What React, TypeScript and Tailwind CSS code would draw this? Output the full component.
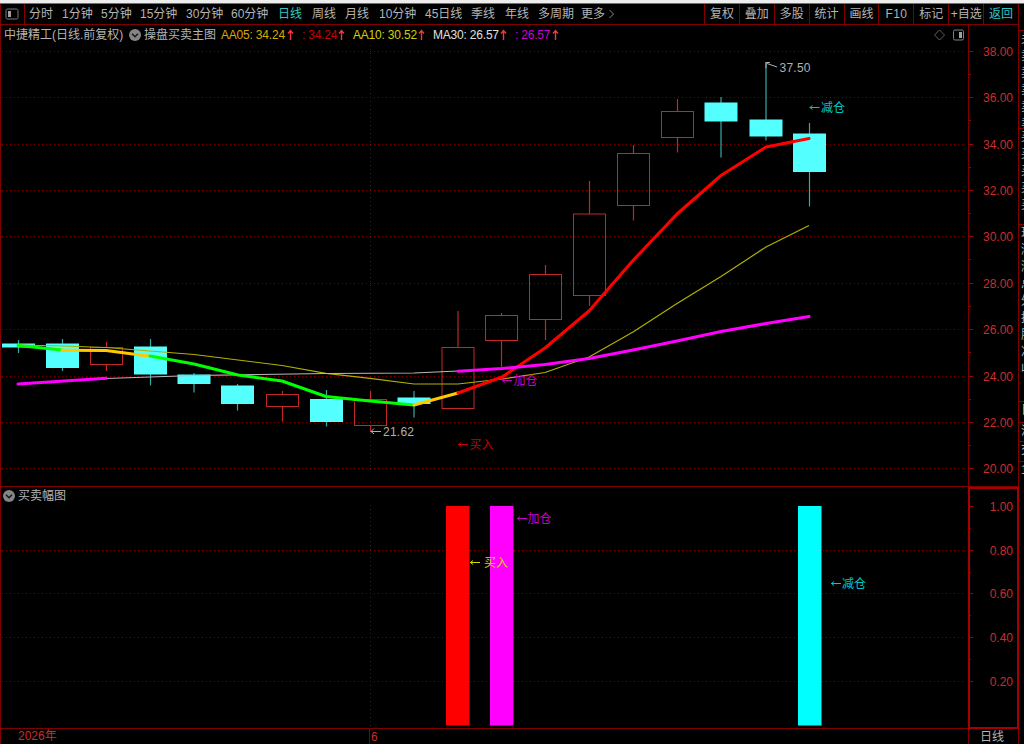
import React from 'react';
import clsx from 'clsx';

const periods = [
  { label: '分时', width: 'w-[33px]' },
  { label: '1分钟', width: 'w-[39px]' },
  { label: '5分钟', width: 'w-[39px]' },
  { label: '15分钟', width: 'w-[46px]' },
  { label: '30分钟', width: 'w-[45px]' },
  { label: '60分钟', width: 'w-[47px]' },
  { label: '日线', width: 'w-[34px]', active: true },
  { label: '周线', width: 'w-[33px]' },
  { label: '月线', width: 'w-[34px]' },
  { label: '10分钟', width: 'w-[46px]' },
  { label: '45日线', width: 'w-[46px]' },
  { label: '季线', width: 'w-[34px]' },
  { label: '年线', width: 'w-[33px]' },
  { label: '多周期', width: 'w-[43px]' },
  { label: '更多', width: 'w-[26px]' },
];

const tools = ['复权', '叠加', '多股', '统计', '画线', 'F10', '标记', '+自选', '返回'];

const indicators = [
  { label: 'AA05: 34.24', color: 'text-[#d8a800]', width: 'w-[81px]' },
  { label: ': 34.24', color: 'text-[#c80000]', width: 'w-[51px]' },
  { label: 'AA10: 30.52', color: 'text-[#d0d000]', width: 'w-[80px]' },
  { label: 'MA30: 26.57', color: 'text-[#e0e0e0]', width: 'w-[82px]' },
  { label: ': 26.57', color: 'text-[#d000d0]', width: 'w-[52px]' },
];

// x center, high, body top, body bottom, low, rising
const candles: [number, number, number, number, number, boolean][] = [
  [18.5, 340, 344, 347, 353, false],
  [62.5, 339, 344, 367.5, 371, false],
  [106.5, 342, 347.5, 364.5, 371, true],
  [150.5, 339, 347, 374, 385.5, false],
  [194, 373, 375, 383.5, 392.5, false],
  [237.5, 384, 386, 403.5, 410.5, false],
  [282.5, 391, 394.5, 406.5, 421.5, true],
  [326.5, 390, 399.5, 421.5, 426.5, false],
  [370.5, 391, 399.5, 425.5, 431, true],
  [414, 391, 398, 403.5, 417.5, false],
  [458, 311, 347.5, 408.5, 408.5, true],
  [501.5, 313, 315.5, 340.5, 367, true],
  [545.5, 265, 274.5, 319.5, 340, true],
  [589.5, 181, 214, 295.5, 306, true],
  [633.5, 145, 153.5, 205.5, 220.5, true],
  [677.5, 99, 111.5, 137.5, 152.5, true],
  [721, 97, 103, 121, 157.5, false],
  [766, 62, 120, 136, 140.5, false],
  [809.5, 123, 134, 171.5, 206.5, false],
];

const priceTicks = [
  ['38.00', 51.5], ['36.00', 97.5], ['34.00', 144.5], ['32.00', 190.5], ['30.00', 236.5],
  ['28.00', 283.5], ['26.00', 329.5], ['24.00', 376.5], ['22.00', 422.5], ['20.00', 468.5],
] as [string, number][];

const signalTicks = [
  ['1.00', 506.5], ['0.80', 550.5], ['0.60', 593.5], ['0.40', 637.5], ['0.20', 681.5],
] as [string, number][];

const quoteMarks = [
  { y: 'h-[98px]', text: '关卖卖卖卖卖' },
  { y: 'h-[96px]', text: '买买买买买' },
  { y: 'h-[177px]', text: '现涨涨总外换股净收' },
  { y: 'h-[21px]', text: '日', color: 'text-[#d0d000]' },
  { y: 'h-[19px]', text: '流' },
  { y: 'h-[20px]', text: '交' },
  { y: 'h-[259px]', text: '1' },
];

function RiseArrow() {
  return (
    <svg width="7" height="12" viewBox="0 0 7 12" className="shrink-0">
      <path d="M3.5 11V2M1 4.5L3.5 1.5L6 4.5" fill="none" stroke="#f03838" strokeWidth="1.4" />
    </svg>
  );
}

function Toggle() {
  return (
    <svg width="12" height="12" viewBox="0 0 12 12" className="shrink-0">
      <circle cx="6" cy="6" r="6" fill="#858585" />
      <path d="M3 4.8L6 7.8L9 4.8" fill="none" stroke="#181818" strokeWidth="1.5" />
    </svg>
  );
}

interface SignalProps {
  x: number;
  y: number;
  label: string;
  color: string;
  gap?: number;
}

function Signal({ x, y, label, color, gap = 11.5 }: SignalProps) {
  return (
    <g>
      <path
        d={`M${x} ${y + 0.5}h10M${x + 3} ${y - 1.5}l-2.5 2l2.5 2`}
        fill="none"
        stroke={color}
        strokeWidth="1"
      />
      <text x={x + gap} y={y + 4.5} fill={color} fontSize="12">
        {label}
      </text>
    </g>
  );
}

function GridLines({ ticks }: { ticks: [string, number][] }) {
  return (
    <g stroke="#780000" strokeWidth="1" strokeDasharray="1 3">
      {ticks.map(([label, y]) => (
        <path key={label} d={`M2 ${y}H965`} />
      ))}
    </g>
  );
}

function Candles() {
  return (
    <g>
      {candles.map(([x, high, top, bottom, low, rising]) => (
        <g key={x} stroke={rising ? '#c02828' : '#38a8a8'} strokeWidth="1.2">
          <path d={`M${x} ${high}V${top}M${x} ${bottom}V${low}`} />
          <rect
            x={x - 16}
            y={top}
            width="32"
            height={bottom - top}
            fill={rising ? 'none' : '#54ffff'}
            stroke={rising ? '#c02828' : '#54ffff'}
            strokeWidth="1"
          />
        </g>
      ))}
    </g>
  );
}

function PriceChart() {
  return (
    <svg width="967" height="442" viewBox="1 44 967 442" className="block">
      <GridLines ticks={priceTicks} />
      <path d="M370.5 45V472" stroke="#780000" strokeDasharray="1 3" />
      <Candles />
      <g fill="none" strokeLinejoin="round">
        <path
          d="M18 345L62 346L106 347.5L150 351L194 354.5L238 360L282 365.5L326 373.3L370 378.3L414 384L458 384L502 379L545 372.5L589 357L633 332L677 303.5L721 276.5L766 247L809 225.5"
          stroke="#b0b000"
          strokeWidth="1.2"
        />
        <path d="M106 378.5L150 377L194 375.5L260 374.5L326 373.5L414 373L458 371" stroke="#b8b8b8" strokeWidth="1.2" />
        <g strokeWidth="3" strokeLinecap="round">
          <path d="M18 345.5L62 350" stroke="#00ff00" />
          <path d="M62 350.3L106 350.5L150 356.3" stroke="#ffc800" />
          <path d="M150 356L194 364L238 375L282 381L326 396.5L370 401L414 405" stroke="#00ff00" />
          <path d="M414 405L458 393" stroke="#ffc800" />
          <path d="M458 393L502 377L545 348L589 311L633 260.5L677 214L721 175.5L766 147L809 138.5" stroke="#ff0000" />
          <path d="M18 384L106 378.3" stroke="#ff00ff" />
          <path d="M458 371.3L502 368.5L545 364.5L589 358.5L633 350L677 341L721 331.5L766 323.5L809 316.5" stroke="#ff00ff" />
        </g>
      </g>
      <path d="M766 68V62.5H770M767 63.5L777 67" fill="none" stroke="#b0b0b0" />
      <text x="779.5" y="72" fill="#b0b0b0" fontSize="12" textLength="31">37.50</text>
      <path d="M370.5 431.5H381M374 428.5L371 431.5L374 434" fill="none" stroke="#b0b0b0" />
      <text x="383" y="436" fill="#b0b0b0" fontSize="12" textLength="31">21.62</text>
      <Signal x={809.5} y={107} label="减仓" color="#00c8c8" />
      <Signal x={502} y={380} label="加仓" color="#c800c8" />
      <Signal x={458} y={444} label="买入" color="#c80000" />
    </svg>
  );
}

function SignalChart() {
  return (
    <svg width="967" height="224" viewBox="1 504 967 224" className="block">
      <GridLines ticks={signalTicks.slice(1)} />
      <path d="M370.5 505V727" stroke="#780000" strokeDasharray="1 3" />
      <rect x="446" y="506" width="23.5" height="219.5" fill="#ff0000" />
      <rect x="490" y="506" width="23.5" height="219.5" fill="#ff00ff" />
      <rect x="798" y="506" width="23.5" height="219.5" fill="#00ffff" />
      <Signal x={517} y={518} label="加仓" color="#c800c8" gap={10.5} />
      <Signal x={470} y={562} label="买入" color="#d8d800" gap={14} />
      <Signal x={831} y={583} label="减仓" color="#00c8c8" gap={11} />
    </svg>
  );
}

interface AxisProps {
  ticks: [string, number][];
  x: number;
  top: number;
  width: number;
  height: number;
  step: number;
}

function Axis({ ticks, x, top, width, height, step }: AxisProps) {
  return (
    <svg width={width} height={height} viewBox={`${x} ${top} ${width} ${height}`} className="block">
      {ticks.map(([label, y], i) => (
        <g key={label}>
          <path d={`M${x} ${y}H973`} stroke="#a00000" />
          {i < ticks.length - 1 && <path d={`M${x} ${y + step}H971`} stroke="#a00000" />}
          <text x="1013" y={y + 4.5} textAnchor="end" fill="#cc2c2c" fontSize="12">
            {label}
          </text>
        </g>
      ))}
    </svg>
  );
}

export default function App() {
  return (
    <div className="flex h-[744px] w-[1024px] flex-col overflow-hidden bg-black font-['Liberation_Sans','Noto_Sans_CJK_SC',sans-serif] text-xs text-[#b4b4b4]">
      <div className="h-1 shrink-0 border-b border-[#707070] bg-[#ededed]" />
      <div className="flex min-h-0 flex-1">
        <div className="flex w-[1019px] shrink-0 flex-col border-l border-[#800000]">
          <header className="flex h-[21px] shrink-0 items-center justify-between border-b border-r border-[#800000]">
            <nav className="flex h-full items-center whitespace-nowrap">
              <div className="flex h-full w-6 items-center border-r border-[#800000] pl-1">
                <svg width="14" height="12" viewBox="0 0 14 12">
                  <rect x="1" y="1" width="12" height="10" rx="1.5" fill="none" stroke="#787878" />
                  <rect x="3" y="3" width="3" height="6" fill="#a0a0a0" />
                </svg>
              </div>
              <div className="w-1" />
              {periods.map((p) => (
                <button key={p.label} className={clsx('text-left', p.width, p.active && 'text-[#30c8c8]')}>
                  {p.label}
                </button>
              ))}
              <svg width="7" height="10" viewBox="0 0 7 10" className="ml-px">
                <path d="M1.5 1L5.5 5L1.5 9" fill="none" stroke="#888" />
              </svg>
            </nav>
            <div className="flex h-full">
              {tools.map((tool) => (
                <button
                  key={tool}
                  className={clsx(
                    'w-[34.9px] whitespace-nowrap border-l border-[#800000] text-center',
                    tool === '返回' && 'text-[#30c8c8]',
                    tool === 'F10' && 'tracking-wide'
                  )}
                >
                  {tool}
                </button>
              ))}
            </div>
          </header>

          <section className="flex h-[462px] shrink-0 border-b border-[#800000]">
            <div className="w-[967px]">
              <div className="flex h-[19px] items-center whitespace-nowrap pl-[3px]">
                <span className="w-[125px]">中捷精工(日线.前复权)</span>
                <Toggle />
                <span className="ml-[3px] w-[77px]">操盘买卖主图</span>
                {indicators.map((item) => (
                  <div
                    key={item.label}
                    className={clsx('flex items-center justify-between pr-2 tracking-[-0.2px]', item.color, item.width)}
                  >
                    {item.label}
                    <RiseArrow />
                  </div>
                ))}
                <svg width="31" height="12" viewBox="0 0 31 12" className="ml-auto mr-[3px]">
                  <path d="M5.5 1L10.5 6L5.5 11L0.5 6Z" fill="none" stroke="#606060" />
                  <rect x="19.5" y="1" width="10" height="10" rx="1.5" fill="none" stroke="#808080" />
                  <rect x="25" y="3" width="3" height="6" fill="#a0a0a0" />
                </svg>
              </div>
              <PriceChart />
            </div>
            <div className="w-[51px] border-x border-[#800000]">
              <Axis ticks={priceTicks} x={969} top={25} width={49} height={461} step={23} />
            </div>
          </section>

          <section className="flex h-[242px] shrink-0">
            <div className="w-[967px] border-b border-[#800000]">
              <div className="flex h-[17px] items-center gap-[3px] pl-[2px]">
                <Toggle />
                <span>买卖幅图</span>
              </div>
              <SignalChart />
            </div>
            <div className="w-[51px] border-2 border-[#a80000]">
              <Axis ticks={signalTicks} x={970} top={489} width={47} height={238} step={22} />
            </div>
          </section>

          <footer className="flex h-[15px] shrink-0 items-center leading-[17px] text-[#cc2c2c]">
            <span className="w-[368px] pl-[17px]">2026年</span>
            <span className="h-full flex-1 border-l border-[#800000] pl-px">6</span>
            <span className="h-full w-[51px] border-x border-[#800000] pl-[11px] text-[#b4b4b4]">日线</span>
          </footer>
        </div>

        <aside className="flex flex-1 flex-col overflow-hidden pt-[26px]">
          {quoteMarks.map((mark) => (
            <div
              key={mark.text}
              className={clsx('shrink-0 overflow-hidden border-t border-[#800000] pl-[2px]', mark.y, mark.color)}
            >
              <div className="w-3 break-all leading-[17px]">{mark.text}</div>
            </div>
          ))}
        </aside>
      </div>
    </div>
  );
}
